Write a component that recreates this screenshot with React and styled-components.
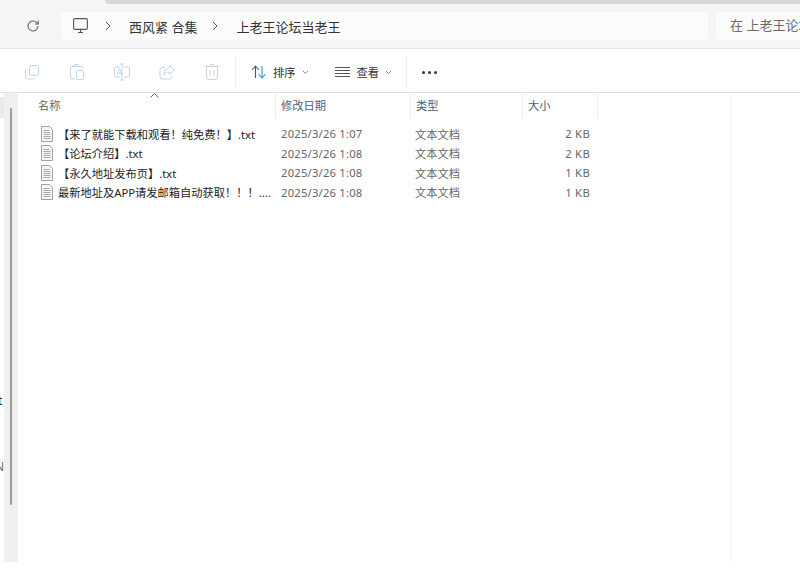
import React from 'react';
import styled, { createGlobalStyle } from 'styled-components';

const GlobalStyle = createGlobalStyle`
    html, body {
        margin: 0;
        height: 100%;
        background: #fff;
    }
    body {
        font-family: "Noto Sans", "Noto Sans CJK SC", sans-serif;
        overflow: hidden;
    }
`

const Page = styled.div`
    width: 800px;
    height: 584px;
    display: flex;
    flex-direction: column;
    overflow: hidden;
`
const TopStrip = styled.div`
    height: 4px;
    background: #f5f5f5;
    flex: none;
    &::before {
        content: "";
        display: block;
        height: 4px;
        margin-left: 105px;
        border-bottom-left-radius: 4px;
        background: #d7d7d7;
    }
`
const NavBar = styled.div`
    height: 45px;
    flex: none;
    box-sizing: border-box;
    background: #f5f5f5;
    border-bottom: 1px solid #e3e3e3;
    display: flex;
    align-items: flex-start;
    padding: 8px 0 0 25px;
`
const IconSlot = styled.div`
    width: 16px;
    height: 28px;
    display: flex;
    align-items: center;
    justify-content: center;
    margin-right: 20px;
    flex: none;
`
const AddressBox = styled.div`
    width: 647px;
    height: 28px;
    flex: none;
    background: #fbfbfb;
    border-radius: 4px;
    display: flex;
    align-items: center;
    padding-left: 12px;
    box-sizing: border-box;
`
const Crumb = styled.span`
    font-size: 13px;
    color: #333;
    white-space: nowrap;
`
const Chevron = styled.svg`
    width: 8px;
    height: 10px;
    margin: ${({$gap}) => $gap};
    flex: none;
`
const SearchBox = styled.div`
    flex: none;
    width: 100px;
    height: 28px;
    margin-left: 8px;
    background: #fbfbfb;
    border-radius: 4px 0 0 4px;
    padding-left: 14px;
    font-size: 13px;
    line-height: 27px;
    color: #6b6b6b;
    white-space: nowrap;
`
const Toolbar = styled.div`
    height: 44px;
    flex: none;
    box-sizing: border-box;
    background: #fff;
    border-bottom: 1px solid #e0e0e0;
    display: flex;
    align-items: center;
    padding: 3px 0 0 24px;
`
const ToolIcon = styled.svg`
    width: 16px;
    height: 18px;
    margin-right: ${({$gap}) => $gap || 29}px;
    flex: none;
    fill: none;
    stroke: ${({$muted}) => $muted ? '#cfd2d4' : '#b9d9f0'};
    stroke-width: 1;
`
const Divider = styled.div`
    width: 1px;
    height: 32px;
    background: #efefef;
    flex: none;
    margin-left: ${({$left}) => $left || 0}px;
`
const SortButton = styled.div`
    display: flex;
    align-items: center;
    margin-left: ${({$left}) => $left}px;
    font-size: 11.25px;
    color: #333;
    flex: none;
`
const SortIcon = styled.svg`
    margin-right: 7px;
    flex: none;
`
const Caret = styled.svg`
    width: 7px;
    height: 5px;
    margin-left: 6px;
    margin-top: 1px;
`
const Dots = styled.div`
    display: flex;
    gap: 3px;
    margin-left: 15px;
`
const Dot = styled.i`
    width: 3px;
    height: 3px;
    border-radius: 50%;
    background: #333;
`
const Body = styled.div`
    flex: 1;
    display: flex;
    min-height: 0;
`
const CutOff = styled.div`
    width: 4px;
    flex: none;
    overflow: hidden;
    padding-top: 4px;
    font-size: 12px;
    line-height: 14px;
    color: #333;
`
const SelectedItem = styled.div`
    height: 21px;
    background: #e9e9e9;
    margin-bottom: 276px;
`
const CutLetter = styled.div`
    margin-left: ${({$shift}) => $shift}px;
    margin-bottom: ${({$gap}) => $gap || 0}px;
    color: ${({$colour}) => $colour || '#333'};
`
const NavEdge = styled.div`
    width: 14px;
    height: 469px;
    flex: none;
    background: #f0f0f0;
    padding: 15px 0 0 6px;
    box-sizing: border-box;
`
const ScrollThumb = styled.div`
    width: 2px;
    height: 397px;
    background: #9b9b9b;
    border-radius: 1px;
`
const Content = styled.div`
    flex: 1;
    min-width: 0;
`
const Grid = styled.div`
    position: relative;
    width: 712px;
    height: 469px;
    border-right: 1px solid #f5f5f5;
    box-sizing: content-box;
`
const SortArrow = styled.svg`
    position: absolute;
    left: 132px;
    top: 0;
    width: 9px;
    height: 5px;
`
const HeaderRow = styled.div`
    display: flex;
    height: 25px;
`
const HeaderCell = styled.div`
    width: ${({$w}) => $w}px;
    flex: none;
    box-sizing: border-box;
    padding-left: ${({$pad}) => $pad}px;
    border-right: 1px solid #ececec;
    font-size: 11.25px;
    line-height: 25px;
    color: #4c607a;
    &:first-child {
        color: #666;
    }
`
const Rows = styled.div`
    padding-top: 6px;
`
const Row = styled.div`
    display: flex;
    align-items: center;
    height: 19.5px;
    font-size: 11.25px;
    white-space: nowrap;
`
const NameCell = styled.div`
    width: 257px;
    flex: none;
    display: flex;
    align-items: center;
    padding-left: 23px;
    box-sizing: border-box;
    color: #222;
`
const FileIcon = styled.svg`
    width: 12px;
    height: 16px;
    flex: none;
    margin-right: 5px;
`
const DateCell = styled.div`
    width: 135px;
    flex: none;
    padding-left: 6px;
    box-sizing: border-box;
    color: #666;
    letter-spacing: 0.2px;
`
const TypeCell = styled.div`
    width: 100px;
    flex: none;
    padding-left: 5px;
    box-sizing: border-box;
    color: #666;
`
const SizeCell = styled.div`
    width: 80px;
    flex: none;
    text-align: right;
    color: #666;
    letter-spacing: 0.3px;
`

const files = [
    {name: '【来了就能下载和观看！纯免费！】.txt', date: '2025/3/26 1:07', size: '2 KB'},
    {name: '【论坛介绍】.txt', date: '2025/3/26 1:08', size: '2 KB'},
    {name: '【永久地址发布页】.txt', date: '2025/3/26 1:08', size: '1 KB'},
    {name: '最新地址及APP请发邮箱自动获取！！！....', date: '2025/3/26 1:08', size: '1 KB'},
]

function TextFile(){
    return(
        <FileIcon viewBox="0 0 12 16">
            <path d="M.5.5h8l3 3v12H.5z" fill="#f7f7f7" stroke="#a0a0a0"/>
            <path d="M2.500 4.500h6M2.500 6.500h7M2.500 8.500h7M2.500 10.500h7M2.500 12.500h7" stroke="#a8a8a8"/>
        </FileIcon>
    )
}

function App(){
    return(
        <Page>
            <GlobalStyle/>
            <TopStrip/>
            <NavBar>
                <IconSlot>
                    <svg width="14" height="14" viewBox="0 0 14 14" fill="none" stroke="#666" strokeWidth="1.100">
                        <path d="M12 7a5 5 0 1 1-1.500-3.600L12 4.800"/>
                        <path d="M12.200 1.500v3.500H8.800"/>
                    </svg>
                </IconSlot>
                <AddressBox>
                    <svg width="15" height="16" viewBox="0 0 15 16" fill="none" stroke="#555" strokeWidth="1.100">
                        <rect x=".6" y=".6" width="13.800" height="10.800" rx="1.500"/>
                        <path d="M5 14.500h5M7.500 11.500v3"/>
                    </svg>
                    <Chevron viewBox="0 0 8 10" $gap="0 17px 0 16px" fill="none" stroke="#555">
                        <path d="M2 1l4 4-4 4"/>
                    </Chevron>
                    <Crumb>西风紧 合集</Crumb>
                    <Chevron viewBox="0 0 8 10" $gap="0 17px 0 14px" fill="none" stroke="#555">
                        <path d="M2 1l4 4-4 4"/>
                    </Chevron>
                    <Crumb>上老王论坛当老王</Crumb>
                </AddressBox>
                <SearchBox>在 上老王论坛当老王</SearchBox>
            </NavBar>
            <Toolbar>
                <ToolIcon viewBox="0 0 16 18">
                    <rect x="5.500" y="2.500" width="9" height="10" rx="2"/>
                    <path d="M3.500 5.500c-1.500.5-2 1-2 2.500v5c0 2 1 3 3 3h4c1.500 0 2-.5 2.500-1.500" stroke="#cfd2d4"/>
                </ToolIcon>
                <ToolIcon viewBox="0 0 16 18" $muted>
                    <path d="M5 3.500H2.500a1 1 0 0 0-1 1V15a1 1 0 0 0 1 1H6M10 3.500h2.500a1 1 0 0 1 1 1V6M5 3.500l1-2h3l1 2z"/>
                    <rect x="7.500" y="7.500" width="7" height="9" rx="1" stroke="#b9d9f0"/>
                </ToolIcon>
                <ToolIcon viewBox="0 0 16 18">
                    <path d="M6 4H2.500a2 2 0 0 0-2 2v6a2 2 0 0 0 2 2H6M10 4h3.500a2 2 0 0 1 2 2v6a2 2 0 0 1-2 2H10" stroke="#cfd2d4"/>
                    <path d="M8 1v16M6 1h4M6 17h4M3 12l2.200-6h.6L8 12M3.800 10H7.200"/>
                </ToolIcon>
                <ToolIcon viewBox="0 0 16 18">
                    <path d="M6 4.500H3a2 2 0 0 0-2 2V14a2 2 0 0 0 2 2h8a2 2 0 0 0 2-2v-1.500" stroke="#cfd2d4"/>
                    <path d="M10.500 2.500l5 4.500-5 4.500V9C8 9 6 10 5 12c0-4 2-7 5.500-7.500z"/>
                </ToolIcon>
                <ToolIcon viewBox="0 0 16 18" $muted $gap={15}>
                    <path d="M1 3.500h14M5.500 3.500l1-2h3l1 2M2.500 3.500V14a2.500 2.500 0 0 0 2.500 2.500h6a2.500 2.500 0 0 0 2.500-2.500V3.500M6 7v6M10 7v6"/>
                </ToolIcon>
                <Divider/>
                <SortButton $left={15}>
                    <SortIcon width="15" height="14" viewBox="0 0 15 14" fill="none" strokeWidth="1.100">
                        <path d="M1 5l3.500-4L8 5M4.500 1v12" stroke="#555"/>
                        <path d="M7.500 9l3.500 4 3.500-4M11 13V1" stroke="#3a8fd6"/>
                    </SortIcon>
                    排序
                    <Caret viewBox="0 0 7 5" fill="none" stroke="#888"><path d="M1 1l2.500 2.500L6 1"/></Caret>
                </SortButton>
                <SortButton $left={26}>
                    <SortIcon width="15" height="10" viewBox="0 0 15 10" fill="none" stroke="#555">
                        <path d="M0 .5h15M0 3.500h15M0 6.500h15M0 9.500h15"/>
                    </SortIcon>
                    查看
                    <Caret viewBox="0 0 7 5" fill="none" stroke="#888"><path d="M1 1l2.500 2.500L6 1"/></Caret>
                </SortButton>
                <Divider $left={14}/>
                <Dots><Dot/><Dot/><Dot/></Dots>
            </Toolbar>
            <Body>
                <CutOff>
                    <SelectedItem/>
                    <CutLetter $shift={-2} $gap={52}>t</CutLetter>
                    <CutLetter $shift={-5} $colour="#7a6a4a">N</CutLetter>
                </CutOff>
                <NavEdge><ScrollThumb/></NavEdge>
                <Content>
                    <Grid>
                        <SortArrow viewBox="0 0 9 5" fill="none" stroke="#666"><path d="M.5 4.500L4.500.5l4 4"/></SortArrow>
                        <HeaderRow>
                            <HeaderCell $w={258} $pad={20}>名称</HeaderCell>
                            <HeaderCell $w={135} $pad={5}>修改日期</HeaderCell>
                            <HeaderCell $w={112} $pad={5}>类型</HeaderCell>
                            <HeaderCell $w={75} $pad={5}>大小</HeaderCell>
                        </HeaderRow>
                        <Rows>
                            {files.map(file => (
                                <Row key={file.name}>
                                    <NameCell>
                                        <TextFile/>
                                        <span>{file.name}</span>
                                    </NameCell>
                                    <DateCell>{file.date}</DateCell>
                                    <TypeCell>文本文档</TypeCell>
                                    <SizeCell>{file.size}</SizeCell>
                                </Row>
                            ))}
                        </Rows>
                    </Grid>
                </Content>
            </Body>
        </Page>
    )
}

export default App
